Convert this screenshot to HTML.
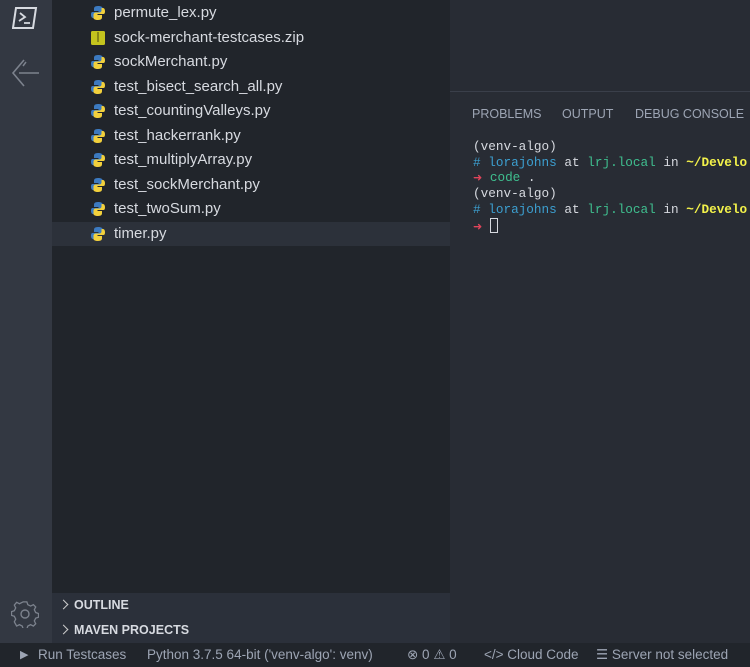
<!DOCTYPE html>
<html><head><meta charset="utf-8"><style>
*{margin:0;padding:0;box-sizing:border-box}
body{width:750px;height:667px;overflow:hidden;background:#282c34;font-family:"Liberation Sans",sans-serif;position:relative}
#act{position:absolute;left:0;top:0;width:52px;height:643px;background:#333842}
#side{position:absolute;left:52px;top:0;width:398px;height:593px;background:#21252b}
.f{position:absolute;left:0;width:398px;height:24.5px;color:#d7dae0;font-size:15px;line-height:24.5px;padding-left:62px}
.f svg{position:absolute;left:38px;top:4px}
.sel{background:#2c313a}
#sec{position:absolute;left:52px;top:593px;width:398px;height:50px;background:#2b303a;color:#d7dae0;font-weight:bold;font-size:12.5px}
#sec div{height:24.5px;line-height:24.5px;padding-left:22px;position:relative}
#sec div:before{content:"";position:absolute;left:8px;top:8px;width:6px;height:6px;border-right:1.3px solid #ccc;border-top:1.3px solid #ccc;transform:rotate(45deg)}
#panel{position:absolute;left:450px;top:91px;width:300px;border-top:1px solid #3a3f4a}
.tabs{position:absolute;top:15px;left:22px;font-size:12.5px;color:#9da5b4;white-space:nowrap}
.tabs span{position:absolute;top:0}
#term{position:absolute;left:473px;top:139px;font-family:"Liberation Mono",monospace;font-size:12.7px;line-height:15.7px;color:#d7dae0;white-space:pre}
.b{color:#3c9fd0}.g{color:#3fbf8f}.y{color:#f3f24a;font-weight:bold}.r{color:#e0445a;font-family:"DejaVu Sans",sans-serif;font-size:11px}
#status{position:absolute;left:0;top:643px;width:750px;height:24px;background:#21252b;color:#9da5b4;font-size:13.5px;line-height:24px;white-space:nowrap}
#status span{position:absolute;top:0}
</style></head><body>
<div id="act">
<svg style="position:absolute;left:12px;top:6px" width="26" height="24" viewBox="0 0 26 24"><path d="M4 2h20l-3 20H1z" fill="none" stroke="#d7dae0" stroke-width="2"/><path d="M8 7l5 4-6 4M12 17h6" fill="none" stroke="#d7dae0" stroke-width="1.8"/></svg>
<svg style="position:absolute;left:10px;top:58px" width="32" height="30" viewBox="0 0 32 30"><path d="M14 2L3 15l11 13M9 15h20" fill="none" stroke="#7c828d" stroke-width="1.6"/><path d="M16 4l-3 4" stroke="#7c828d" stroke-width="1.5"/></svg>
<svg style="position:absolute;left:11px;top:600px" width="28" height="28" viewBox="0 0 28 28"><path d="M12 2h4l1 3 3 1.5 3-1.5 2.5 2.5-1.5 3 1.5 3 3 1v4l-3 1-1.5 3 1.5 3-2.5 2.5-3-1.5-3 1.5-1 3h-4l-1-3-3-1.5-3 1.5L2.5 23.5l1.5-3-1.5-3-3-1v-4l3-1 1.5-3-1.5-3L5 2.5l3 1.5 3-1.5z" transform="translate(1 0) scale(.93)" fill="none" stroke="#7c828d" stroke-width="1.4"/><circle cx="14" cy="14" r="4" fill="none" stroke="#7c828d" stroke-width="1.4"/></svg>
</div>
<div id="side">
<div class="f" style="top:1px"><svg width="16" height="16" viewBox="0 0 16 16"><path d="M8 1C4 1 4 3 4 4v2h4.5v1H2.5C1 7 1 9 1 10s.5 3 2 3h1.5v-2.5c0-1 1-2 2-2h4c1 0 2-1 2-2V3c0-1-1.5-2-4.5-2z" fill="#3c7ac0"/><path d="M8 15c4 0 4-2 4-3v-2H7.5V9h6c1.5 0 1.5-2 1.5-3s-.5-3-2-3h-1.5v2.5c0 1-1 2-2 2h-4c-1 0-2 1-2 2V13c0 1 1.5 2 4.5 2z" fill="#f2d03c"/></svg>permute_lex.py</div>
<div class="f" style="top:25.5px"><svg width="16" height="16" viewBox="0 0 16 16"><rect x="1" y="1" width="14" height="14" rx="1.5" fill="#c4c41e"/><path d="M7 3h2M7 5h2M7 7h2M7 9h2M7 11h2" stroke="#4a4a10" stroke-width="1"/></svg>sock-merchant-testcases.zip</div>
<div class="f" style="top:50px"><svg width="16" height="16" viewBox="0 0 16 16"><path d="M8 1C4 1 4 3 4 4v2h4.5v1H2.5C1 7 1 9 1 10s.5 3 2 3h1.5v-2.5c0-1 1-2 2-2h4c1 0 2-1 2-2V3c0-1-1.5-2-4.5-2z" fill="#3c7ac0"/><path d="M8 15c4 0 4-2 4-3v-2H7.5V9h6c1.5 0 1.5-2 1.5-3s-.5-3-2-3h-1.5v2.5c0 1-1 2-2 2h-4c-1 0-2 1-2 2V13c0 1 1.5 2 4.5 2z" fill="#f2d03c"/></svg>sockMerchant.py</div>
<div class="f" style="top:74.5px"><svg width="16" height="16" viewBox="0 0 16 16"><path d="M8 1C4 1 4 3 4 4v2h4.5v1H2.5C1 7 1 9 1 10s.5 3 2 3h1.5v-2.5c0-1 1-2 2-2h4c1 0 2-1 2-2V3c0-1-1.5-2-4.5-2z" fill="#3c7ac0"/><path d="M8 15c4 0 4-2 4-3v-2H7.5V9h6c1.5 0 1.5-2 1.5-3s-.5-3-2-3h-1.5v2.5c0 1-1 2-2 2h-4c-1 0-2 1-2 2V13c0 1 1.5 2 4.5 2z" fill="#f2d03c"/></svg>test_bisect_search_all.py</div>
<div class="f" style="top:99px"><svg width="16" height="16" viewBox="0 0 16 16"><path d="M8 1C4 1 4 3 4 4v2h4.5v1H2.5C1 7 1 9 1 10s.5 3 2 3h1.5v-2.5c0-1 1-2 2-2h4c1 0 2-1 2-2V3c0-1-1.5-2-4.5-2z" fill="#3c7ac0"/><path d="M8 15c4 0 4-2 4-3v-2H7.5V9h6c1.5 0 1.5-2 1.5-3s-.5-3-2-3h-1.5v2.5c0 1-1 2-2 2h-4c-1 0-2 1-2 2V13c0 1 1.5 2 4.5 2z" fill="#f2d03c"/></svg>test_countingValleys.py</div>
<div class="f" style="top:123.5px"><svg width="16" height="16" viewBox="0 0 16 16"><path d="M8 1C4 1 4 3 4 4v2h4.5v1H2.5C1 7 1 9 1 10s.5 3 2 3h1.5v-2.5c0-1 1-2 2-2h4c1 0 2-1 2-2V3c0-1-1.5-2-4.5-2z" fill="#3c7ac0"/><path d="M8 15c4 0 4-2 4-3v-2H7.5V9h6c1.5 0 1.5-2 1.5-3s-.5-3-2-3h-1.5v2.5c0 1-1 2-2 2h-4c-1 0-2 1-2 2V13c0 1 1.5 2 4.5 2z" fill="#f2d03c"/></svg>test_hackerrank.py</div>
<div class="f" style="top:148px"><svg width="16" height="16" viewBox="0 0 16 16"><path d="M8 1C4 1 4 3 4 4v2h4.5v1H2.5C1 7 1 9 1 10s.5 3 2 3h1.5v-2.5c0-1 1-2 2-2h4c1 0 2-1 2-2V3c0-1-1.5-2-4.5-2z" fill="#3c7ac0"/><path d="M8 15c4 0 4-2 4-3v-2H7.5V9h6c1.5 0 1.5-2 1.5-3s-.5-3-2-3h-1.5v2.5c0 1-1 2-2 2h-4c-1 0-2 1-2 2V13c0 1 1.5 2 4.5 2z" fill="#f2d03c"/></svg>test_multiplyArray.py</div>
<div class="f" style="top:172.5px"><svg width="16" height="16" viewBox="0 0 16 16"><path d="M8 1C4 1 4 3 4 4v2h4.5v1H2.5C1 7 1 9 1 10s.5 3 2 3h1.5v-2.5c0-1 1-2 2-2h4c1 0 2-1 2-2V3c0-1-1.5-2-4.5-2z" fill="#3c7ac0"/><path d="M8 15c4 0 4-2 4-3v-2H7.5V9h6c1.5 0 1.5-2 1.5-3s-.5-3-2-3h-1.5v2.5c0 1-1 2-2 2h-4c-1 0-2 1-2 2V13c0 1 1.5 2 4.5 2z" fill="#f2d03c"/></svg>test_sockMerchant.py</div>
<div class="f" style="top:197px"><svg width="16" height="16" viewBox="0 0 16 16"><path d="M8 1C4 1 4 3 4 4v2h4.5v1H2.5C1 7 1 9 1 10s.5 3 2 3h1.5v-2.5c0-1 1-2 2-2h4c1 0 2-1 2-2V3c0-1-1.5-2-4.5-2z" fill="#3c7ac0"/><path d="M8 15c4 0 4-2 4-3v-2H7.5V9h6c1.5 0 1.5-2 1.5-3s-.5-3-2-3h-1.5v2.5c0 1-1 2-2 2h-4c-1 0-2 1-2 2V13c0 1 1.5 2 4.5 2z" fill="#f2d03c"/></svg>test_twoSum.py</div>
<div class="f sel" style="top:221.5px"><svg width="16" height="16" viewBox="0 0 16 16"><path d="M8 1C4 1 4 3 4 4v2h4.5v1H2.5C1 7 1 9 1 10s.5 3 2 3h1.5v-2.5c0-1 1-2 2-2h4c1 0 2-1 2-2V3c0-1-1.5-2-4.5-2z" fill="#3c7ac0"/><path d="M8 15c4 0 4-2 4-3v-2H7.5V9h6c1.5 0 1.5-2 1.5-3s-.5-3-2-3h-1.5v2.5c0 1-1 2-2 2h-4c-1 0-2 1-2 2V13c0 1 1.5 2 4.5 2z" fill="#f2d03c"/></svg>timer.py</div>
</div>
<div id="sec"><div>OUTLINE</div><div>MAVEN PROJECTS</div></div>
<div id="panel"><div class="tabs"><span style="left:0">PROBLEMS</span><span style="left:90px">OUTPUT</span><span style="left:163px">DEBUG CONSOLE</span></div></div>
<div id="term">(venv-algo)
<span class="b"># lorajohns</span> at <span class="g">lrj.local</span> in <span class="y">~/Develo</span>
<span class="r">➜</span> <span class="g">code</span> .
(venv-algo)
<span class="b"># lorajohns</span> at <span class="g">lrj.local</span> in <span class="y">~/Develo</span>
<span class="r">➜</span> <span style="display:inline-block;width:8px;height:15px;border:1px solid #d7dae0;vertical-align:-3px"></span></div>
<div id="status">
<span style="left:20px;font-size:11px">▶</span>
<span style="left:38px">Run Testcases</span>
<span style="left:147px">Python 3.7.5 64-bit ('venv-algo': venv)</span>
<span style="left:407px">⊗ 0 ⚠ 0</span>
<span style="left:484px">&lt;/&gt; Cloud Code</span>
<span style="left:596px">☰ Server not selected</span>
</div>
</body></html>
